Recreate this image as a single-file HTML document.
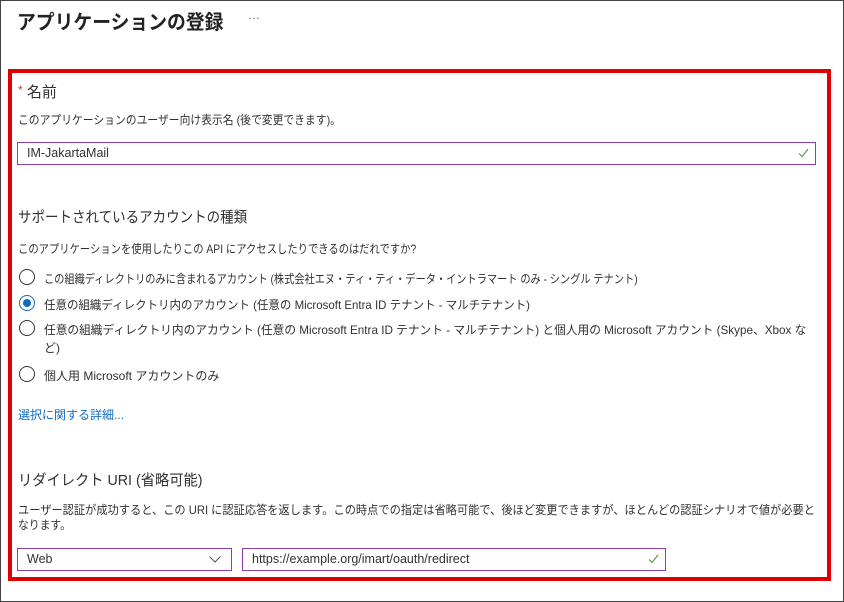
<!DOCTYPE html>
<html><head><meta charset="utf-8"><style>
body{margin:0;width:844px;height:602px;background:#fff;font-family:"Liberation Sans","Noto Sans CJK JP",sans-serif;color:#323130;position:relative;overflow:hidden}
.frame{position:absolute;left:0;top:0;width:842px;height:600px;border:1px solid #444}
.a{position:absolute;white-space:nowrap;transform-origin:0 0}
.t{font-size:12px}
.red{position:absolute;left:8px;top:69px;width:815px;height:504px;border:4px solid #e00000}
.inp{position:absolute;border:1px solid #8a3fb0;background:#fff;font-size:12.5px;padding-left:9px;box-sizing:border-box}
.radio{position:absolute;left:19px;width:16px;height:16px;border:1px solid #333;border-radius:50%;box-sizing:border-box}
.chk{position:absolute;right:6px;top:5px}
</style></head><body>
<div class="frame"></div>
<div class="a" style="left:17px;top:6px;font-size:20px;font-weight:bold;color:#222;transform:scaleX(0.94)">アプリケーションの登録</div>
<div class="a" style="left:248px;top:8px;font-size:12px;color:#666">…</div>
<div class="red"></div>
<div class="a" style="left:18px;top:81px;font-size:15px"><span style="color:#d13438;font-size:12px;vertical-align:3px">*</span> 名前</div>
<div class="a t" style="left:18px;top:111px;transform:scaleX(0.9)">このアプリケーションのユーザー向け表示名 (後で変更できます)。</div>
<div class="inp" style="left:17px;top:142px;width:799px;height:23px;line-height:21px">IM-JakartaMail<svg class="chk" width="11" height="10" viewBox="0 0 11 10"><path d="M1 5.5L4 8.5L10 1" fill="none" stroke="#5a9e3a" stroke-width="1.2"/></svg></div>
<div class="a" style="left:18px;top:206px;font-size:15px;transform:scaleX(0.9)">サポートされているアカウントの種類</div>
<div class="a t" style="left:18px;top:240px;transform:scaleX(0.86)">このアプリケーションを使用したりこの API にアクセスしたりできるのはだれですか?</div>
<div class="radio" style="top:269px"></div>
<div class="a t" style="left:44px;top:270px;transform:scaleX(0.85)">この組織ディレクトリのみに含まれるアカウント (株式会社エヌ・ティ・ティ・データ・イントラマート のみ - シングル テナント)</div>
<div class="radio" style="top:295px;border-color:#0f6cbd"><div style="position:absolute;left:3px;top:3px;width:8px;height:8px;border-radius:50%;background:#0f6cbd"></div></div>
<div class="a t" style="left:44px;top:296px;transform:scaleX(0.957)">任意の組織ディレクトリ内のアカウント (任意の Microsoft Entra ID テナント - マルチテナント)</div>
<div class="radio" style="top:320px"></div>
<div class="a t" style="left:44px;top:321px;transform:scaleX(0.975)">任意の組織ディレクトリ内のアカウント (任意の Microsoft Entra ID テナント - マルチテナント) と個人用の Microsoft アカウント (Skype、Xbox な</div>
<div class="a t" style="left:44px;top:339px">ど)</div>
<div class="radio" style="top:366px"></div>
<div class="a t" style="left:44px;top:367px">個人用 Microsoft アカウントのみ</div>
<div class="a t" style="left:18px;top:406px;color:#0f6cbd">選択に関する詳細...</div>
<div class="a" style="left:18px;top:469px;font-size:15px;transform:scaleX(0.95)">リダイレクト URI (省略可能)</div>
<div class="a t" style="left:18px;top:501px;transform:scaleX(0.935)">ユーザー認証が成功すると、この URI に認証応答を返します。この時点での指定は省略可能で、後ほど変更できますが、ほとんどの認証シナリオで値が必要と</div>
<div class="a t" style="left:18px;top:516px;transform:scaleX(0.9)">なります。</div>
<div class="inp" style="left:17px;top:548px;width:215px;height:23px;line-height:21px">Web<svg style="position:absolute;right:10px;top:7px" width="12" height="7" viewBox="0 0 12 7"><path d="M0.5 0.5L6 6L11.5 0.5" fill="none" stroke="#555" stroke-width="1"/></svg></div>
<div class="inp" style="left:242px;top:548px;width:424px;height:23px;line-height:21px">https://example.org/imart/oauth/redirect<svg class="chk" width="11" height="10" viewBox="0 0 11 10"><path d="M1 5.5L4 8.5L10 1" fill="none" stroke="#5a9e3a" stroke-width="1.2"/></svg></div>
</body></html>
